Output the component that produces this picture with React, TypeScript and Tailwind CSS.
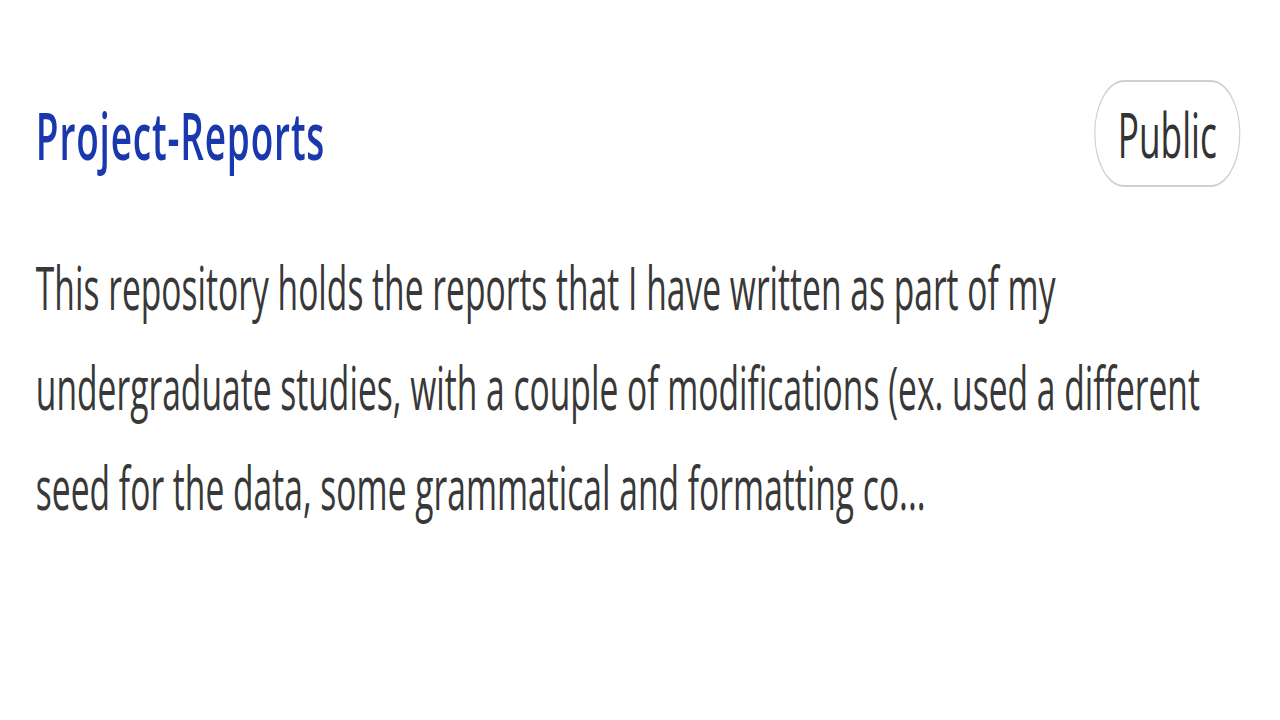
import React from "react";

export default function App() {
  const lines = [
    "This repository holds the reports that I have written as part of my",
    "undergraduate studies, with a couple of modifications (ex. used a different",
    "seed for the data, some grammatical and formatting co...",
  ];
  return (
    <div className="w-[1280px] h-[720px] bg-white overflow-hidden">
      <div
        className="w-[2286px] origin-top-left scale-x-[0.56] pl-[64px] pr-[71px] pt-[80px]"
        style={{ fontFamily: '"Open Sans", "Noto Sans", sans-serif' }}
      >
        <div className="flex items-center justify-between h-[107px]">
          <a className="text-[66px] leading-none font-semibold tracking-[1.5px] text-[#1a38ad] whitespace-nowrap">
            Project-Reports
          </a>
          <span className="h-[107px] flex items-center px-[40px] rounded-full border-2 border-[#cfcfcf] text-[63px] leading-none text-[#333333]">
            Public
          </span>
        </div>
        <div className="mt-[50px] text-[60px] leading-[100px] text-[#383838]">
          {lines.map((l) => (
            <div key={l} className="whitespace-nowrap">
              {l}
            </div>
          ))}
        </div>
      </div>
    </div>
  );
}
